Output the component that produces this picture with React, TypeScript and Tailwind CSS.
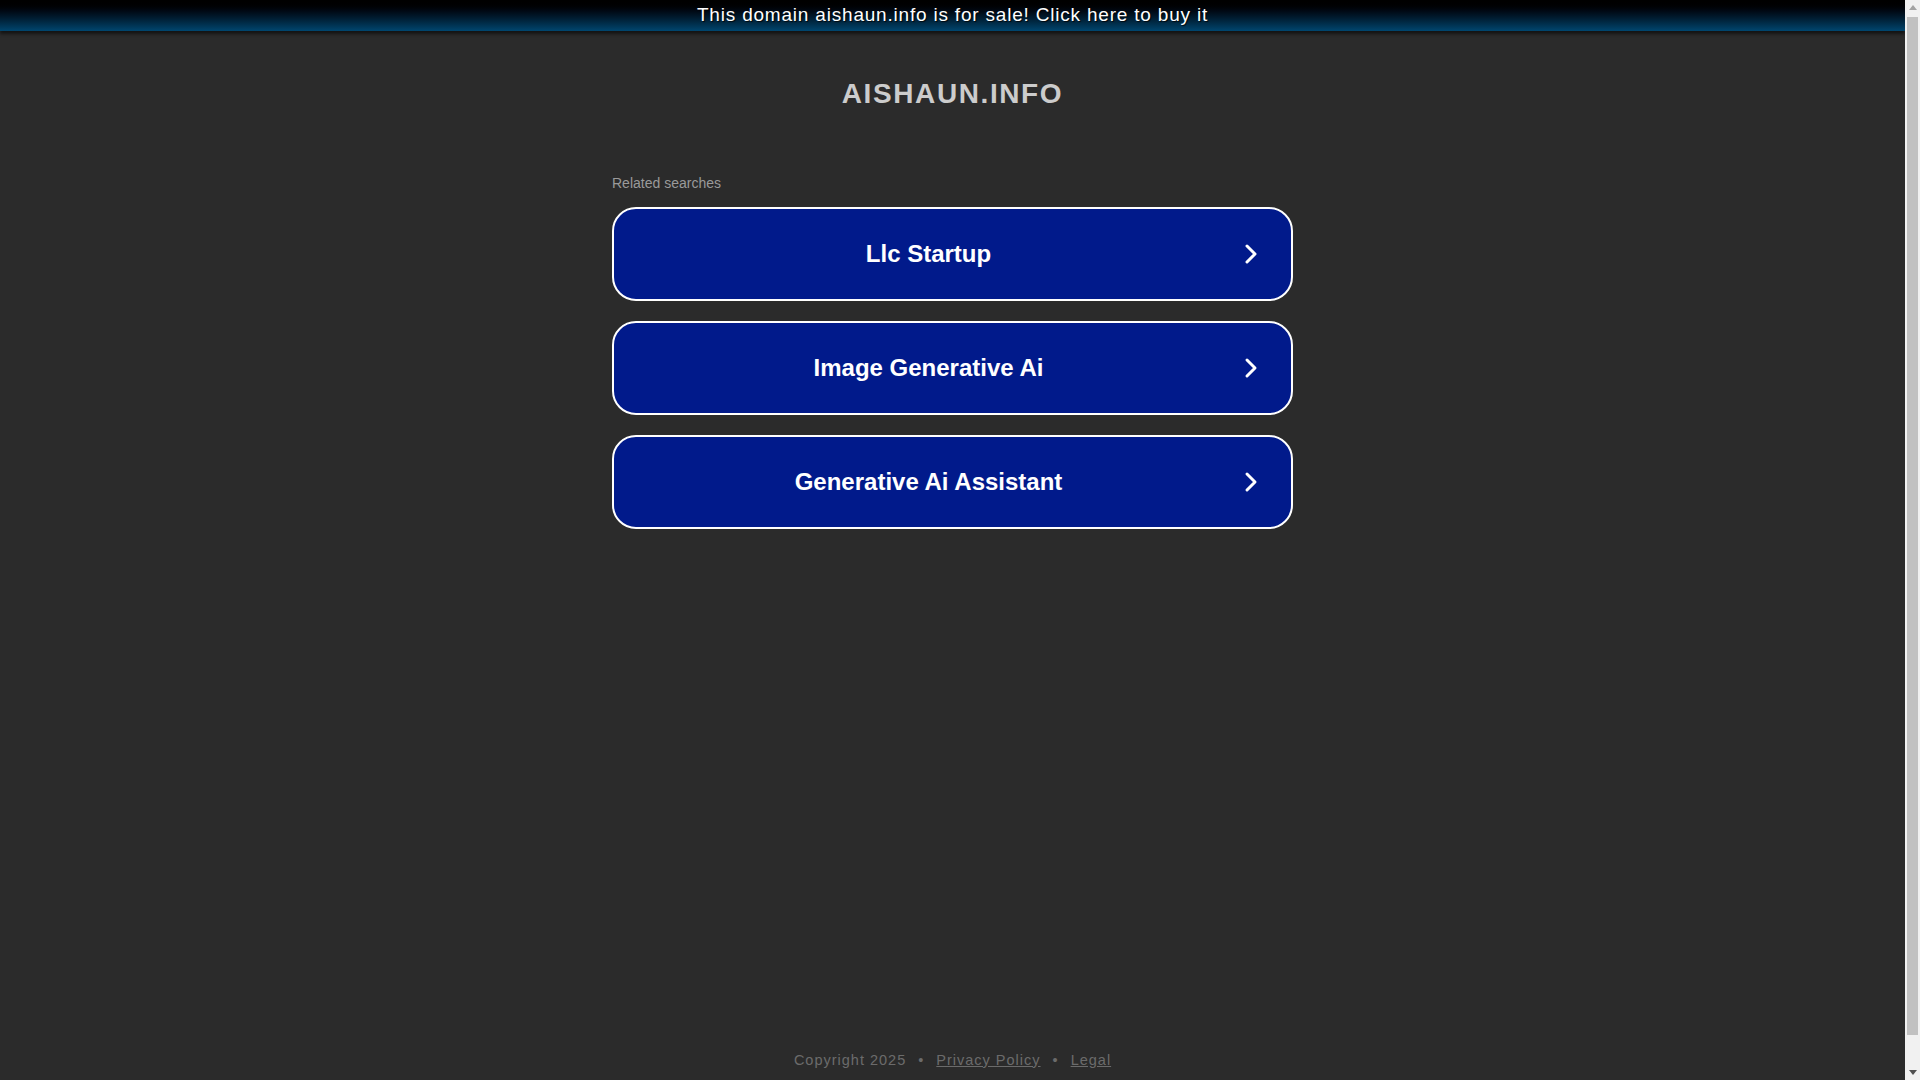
import React from "react";

const items = ["Llc Startup", "Image Generative Ai", "Generative Ai Assistant"];

function Chevron() {
  return (
    <svg width="18" height="24" viewBox="0 0 18 24" fill="none" className="absolute right-[31px] top-1/2 -translate-y-1/2">
      <path d="M5 4 L13 12 L5 20" stroke="white" strokeWidth="3" strokeLinecap="round" strokeLinejoin="round" />
    </svg>
  );
}

function Scrollbar() {
  return (
    <div className="w-[15px] h-[1080px] bg-[#f1f1f1] flex flex-col shrink-0">
      <div className="h-[15px] flex items-center justify-center">
        <svg width="8" height="5" viewBox="0 0 8 5"><path d="M4 0 L8 5 L0 5 Z" fill="#a3a3a3" /></svg>
      </div>
      <div className="flex-1 px-[2px] pt-[2px]">
        <div className="h-[1018px] bg-[#c1c1c1]" />
      </div>
      <div className="h-[15px] flex items-center justify-center">
        <svg width="8" height="5" viewBox="0 0 8 5"><path d="M0 0 L8 0 L4 5 Z" fill="#505050" /></svg>
      </div>
    </div>
  );
}

export default function App() {
  return (
    <div className="h-[1080px] overflow-hidden flex bg-[#2b2b2b] font-['Liberation_Sans',Arial,sans-serif]">
      <div className="flex-1 flex flex-col">
        <div className="h-[31px] bg-gradient-to-b from-[#000000] to-[#00466f] shadow-[0_3px_3px_rgba(0,0,0,0.55)] flex items-center justify-center pb-[2px]">
          <span className="text-white text-[19px] tracking-[0.8px] leading-none [text-shadow:1px_1px_1px_rgba(0,0,0,0.8)]">This domain aishaun.info is for sale! Click here to buy it</span>
        </div>
        <div className="pt-[49px] text-center text-[#cccccc] font-bold text-[28px] tracking-[1.6px] leading-none">AISHAUN.INFO</div>
        <div className="w-[681px] mx-auto mt-[68px]">
          <div className="text-[#9a9a9a] text-[14px] leading-none mb-[17px]">Related searches</div>
          <div className="flex flex-col gap-[20px]">
            {items.map((t) => (
              <div key={t} className="relative h-[94px] rounded-[24px] border-2 border-white bg-[#011a8b] flex items-center justify-center pr-[48px]">
                <span className="text-white font-bold text-[24px] leading-none">{t}</span>
                <Chevron />
              </div>
            ))}
          </div>
        </div>
        <div className="mt-auto pb-[13px] flex justify-center items-center gap-[12px] text-[14.5px] text-[#6b6b6b] tracking-[1px] leading-none">
          <span>Copyright 2025</span>
          <span>•</span>
          <span className="underline">Privacy Policy</span>
          <span>•</span>
          <span className="underline">Legal</span>
        </div>
      </div>
      <Scrollbar />
    </div>
  );
}
